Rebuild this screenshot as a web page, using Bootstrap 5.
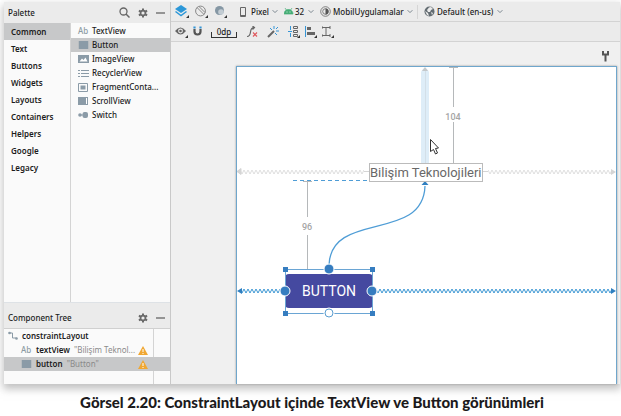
<!DOCTYPE html>
<html lang="tr">
<head>
<meta charset="utf-8">
<meta name="viewport" content="width=device-width, initial-scale=1">
<title>ConstraintLayout</title>
<link href="https://cdn.jsdelivr.net/npm/bootstrap@5.3.0/dist/css/bootstrap.min.css" rel="stylesheet">
<style>
body{background:#fff;font-family:"Noto Sans","Open Sans",sans-serif;font-size:8px;line-height:14px;color:#1c1c1c;font-weight:500}
button,select{font:inherit;color:inherit;background:none;border:0;padding:0;margin:0}
svg{display:block;flex:none}
.page{padding:2px 1px 0 4px}
.ide{background:#f0f0f0;box-shadow:0 4px 8px 1px #8888}
.side{width:167px;border-right:1px solid #c9c9c9;background:#ebebeb}
.head{height:21px;background:#ebebeb;padding:0 5px 0 4px}
.head h2{font-size:8px;line-height:14px;margin:0;font-weight:500}
.pane{background:#fafafa}
.cats{width:67px;border-right:1px solid #d4d4d4}
.cats button{height:17px;padding-left:7px;text-align:left;font-weight:600}
.wid{padding-top:1px}
.wid button{height:14px;padding-left:7px;gap:3px;text-align:left}
.sel{background:#c7c8c9}
.ab{color:#8d9aa3;width:11px;flex:none}
.tree{border-top:1px solid #d0d0d0;padding-bottom:13px;background:linear-gradient(#d4d4d4,#d4d4d4) 149px 0/1px 100% no-repeat #fafafa}
.tree li{height:14px;white-space:nowrap}
.leaf{padding:0 22px 0 17px}
.hint{color:#8a8a8a;font-weight:400}
.name{font-weight:600}
.bar{height:20px;border-bottom:1px solid #d3d3d3;background:#ebebeb;padding-left:4px;gap:6px}
.bar select{appearance:none;outline:0;line-height:14px}
.bar label{gap:0}
.device{margin-left:7px}
.locale{padding-left:6px;margin-left:-2px;border-left:1px solid #d5d5d5}
.chev{margin-left:3px}
.tools{gap:5px}
.dim{width:26px;height:13px;line-height:11px;border-bottom:1px solid #333;background:linear-gradient(#333,#333) 0 100%/1px 5px no-repeat,linear-gradient(#333,#333) 100% 100%/1px 5px no-repeat}
.surface{padding:24px 3px 0 65px;background:#f0f0f0}
.wrench{top:9px;right:11px}
.canvas{background:#fff;border-top:1px solid #6fa6cc;box-shadow:0 0 2px #999}
.edge{inset:0;border:solid #6fa6cc;border-width:0 1px}
.tv{left:133px;top:96px;border:1px solid #bbb;background:#fff;color:#686868;font:13px/17px Roboto,sans-serif;white-space:nowrap}
.andbtn{left:49px;top:207px;width:88px;height:34px;border-radius:4px;background:#4549a0;color:#fff;font:400 14px/34px Roboto,sans-serif}
.caption{font:900 15px/20px "Lato","Open Sans",sans-serif;padding:8px 0 4px;color:#1c1a1c}
</style>
<script src="https://cdn.jsdelivr.net/npm/bootstrap@5.3.0/dist/js/bootstrap.bundle.min.js"></script>
</head>
<body>
<svg width="0" height="0" class="position-absolute" aria-hidden="true">
<defs>
<symbol id="gear" viewBox="0 0 10 10"><path d="M5 .5v9M.9 2.700l8.200 4.600M.9 7.300l8.200-4.600" stroke="#6a6a6a" stroke-width="2"/><circle cx="5" cy="5" r="3.300" fill="#6a6a6a"/><circle cx="5" cy="5" r="1.600" fill="#ebebeb"/></symbol>
<symbol id="chev" viewBox="0 0 6 5"><path d="M.6 1.200 3 3.600 5.400 1.200" fill="none" stroke="#7b8790"/></symbol>
<symbol id="warn" viewBox="0 0 10 9"><path d="M5 0 10 9H0z" fill="#f0a732"/><path d="M5 3v3M5 7v1" stroke="#fff"/></symbol>
<symbol id="blk" viewBox="0 0 10 8"><rect width="10" height="8" rx=".5" fill="#8b9ba7"/></symbol>
<pattern id="zg" width="4" height="6" patternUnits="userSpaceOnUse" y="102"><path d="M-1 2.500 0 1l2 4 2-4 1 2" fill="none" stroke="#dadada" stroke-width=".9"/></pattern>
<pattern id="zb" width="4" height="6" patternUnits="userSpaceOnUse" y="221"><path d="M-1 3 0 1l2 4 2-4 1 2" fill="none" stroke="#3d97d3"/></pattern>
</defs></svg>
<figure class="page d-flex flex-column vh-100 m-0">
<div class="ide d-flex flex-grow-1">
<aside class="side d-flex flex-column flex-shrink-0">
  <div class="head d-flex align-items-center"><h2 class="me-auto">Palette</h2>
    <button aria-label="Search" class="me-2"><svg width="11" height="11" viewBox="0 0 11 11"><circle cx="4.500" cy="4.500" r="3.500" fill="none" stroke="#666" stroke-width="1.300"/><path d="m7 7 3.500 3.500" stroke="#666" stroke-width="1.500"/></svg></button>
    <button aria-label="Palette settings" class="me-2"><svg width="10" height="10"><use href="#gear"/></svg></button>
    <button aria-label="Hide palette"><svg width="9" height="10"><path d="M0 5h9" stroke="#777" stroke-width="1.500"/></svg></button>
  </div>
  <div class="pane d-flex flex-grow-1 border-bottom">
    <nav class="cats d-flex flex-column" aria-label="Categories">
      <button class="sel">Common</button><button>Text</button><button>Buttons</button><button>Widgets</button><button>Layouts</button><button>Containers</button><button>Helpers</button><button>Google</button><button>Legacy</button>
    </nav>
    <div class="wid d-flex flex-column flex-grow-1">
      <button class="d-flex align-items-center"><span class="ab">Ab</span>TextView</button>
      <button class="d-flex align-items-center sel"><svg width="11" height="8" viewBox="0 0 10 8"><use href="#blk"/></svg>Button</button>
      <button class="d-flex align-items-center"><svg width="11" height="8"><rect width="11" height="8" fill="#8b9ba7"/><path d="M1.500 6.500 4 3.500l1.500 1.500L7.500 2.500l2 4z" fill="#fff"/></svg>ImageView</button>
      <button class="d-flex align-items-center"><svg width="11" height="9"><path d="M0 1.500h2m1 0h8M0 4.500h2m1 0h8M0 7.500h2m1 0h8" stroke="#8b9ba7"/></svg>RecyclerView</button>
      <button class="d-flex align-items-center"><svg width="11" height="9"><path d="M.5.5h9v8h-9z" fill="none" stroke="#8b9ba7"/><path d="M2.500 2.500h5v4h-5z" fill="#8b9ba7"/></svg>FragmentConta...</button>
      <button class="d-flex align-items-center"><svg width="11" height="8"><rect width="10" height="8" fill="#8b9ba7"/><path d="M8.500 1v6" stroke="#fff"/></svg>ScrollView</button>
      <button class="d-flex align-items-center"><svg width="11" height="8"><circle cx="2" cy="4" r="1.800" fill="#8b9ba7"/><path d="M2 4h3" stroke="#8b9ba7"/><rect x="4.500" y="1" width="5.500" height="6" rx="2" fill="#8b9ba7"/></svg>Switch</button>
    </div>
  </div>
  <div class="head d-flex align-items-center mt-1"><h2 class="me-auto">Component Tree</h2>
    <button aria-label="Tree settings" class="me-2"><svg width="10" height="10"><use href="#gear"/></svg></button>
    <button aria-label="Hide tree"><svg width="9" height="10"><path d="M0 5h9" stroke="#777" stroke-width="1.500"/></svg></button>
  </div>
  <ul class="tree list-unstyled m-0">
    <li class="d-flex align-items-center ps-1 gap-1"><svg width="10" height="10"><path d="M1.500 2h3v5h4" fill="none" stroke="#8b9ba7"/><circle cx="1.500" cy="2" r="1.300" fill="#8b9ba7"/><circle cx="8.500" cy="7.500" r="1.300" fill="#8b9ba7"/></svg><span class="name">constraintLayout</span></li>
    <li class="leaf d-flex align-items-center"><span class="ab me-1">Ab</span><span class="name me-1">textView</span><span class="hint me-auto">"Bilişim Teknol...</span><svg width="10" height="9"><use href="#warn"/></svg></li>
    <li class="leaf d-flex align-items-center sel"><svg width="11" height="8" class="me-1" viewBox="0 0 10 8"><use href="#blk"/></svg><span class="name me-1">button</span><span class="hint me-auto">"Button"</span><svg width="10" height="9"><use href="#warn"/></svg></li>
  </ul>
</aside>
<main class="d-flex flex-column flex-grow-1">
  <div class="bar d-flex align-items-center">
    <button aria-label="Surface"><svg width="14" height="13"><path d="m6 0 6 4-6 4-6-4z" fill="#2b97d8"/><path d="m.5 6.500 5.500 4 5.500-4" fill="none" stroke="#2b97d8" stroke-width="1.500"/><path d="M11 13h3v-3z" fill="#333"/></svg></button>
    <button aria-label="Orientation"><svg width="13" height="13"><circle cx="5.500" cy="6" r="4.900" fill="none" stroke="#888"/><path d="m2 2.500 7 7M4 1.500l6 6" stroke="#888"/><path d="M10 13h3v-3z" fill="#333"/></svg></button>
    <button aria-label="Night mode"><svg width="13" height="13"><circle cx="5.500" cy="5.500" r="4.500" fill="#8597a4"/><circle cx="7" cy="7" r="2.800" fill="#c2ccd3"/><path d="M10 13h3v-3z" fill="#333"/></svg></button>
    <label class="device d-flex align-items-center"><svg width="11" height="10"><path d="M.5.5h5v9h-5z" fill="none" stroke="#666"/><path d="M.5 8.500h5" stroke="#666"/></svg><select aria-label="Device"><option>Pixel</option></select><svg width="6" height="5" class="chev"><use href="#chev"/></svg></label>
    <label class="d-flex align-items-center"><svg width="11" height="7"><path d="M0 6a4.500 4.500 0 0 1 9 0zM1 0l2 3M8 0 6 3" fill="#45ad76" stroke="#45ad76" stroke-width=".7"/><path d="M2.500 4h1m2 0h1" stroke="#fff" stroke-width=".8"/></svg><select aria-label="API"><option>32</option></select><svg width="6" height="5" class="chev"><use href="#chev"/></svg></label>
    <label class="d-flex align-items-center"><svg width="13" height="11"><circle cx="5.500" cy="5.500" r="4.800" fill="none" stroke="#666" stroke-width=".8"/><circle cx="5.500" cy="5.500" r="2.800" fill="none" stroke="#666" stroke-width=".8"/><path d="M5.500 2.500a3 3 0 0 1 0 6z" fill="#555"/></svg><select aria-label="Theme"><option>MobilUygulamalar</option></select><svg width="6" height="5" class="chev"><use href="#chev"/></svg></label>
    <label class="locale d-flex align-items-center"><svg width="13" height="11"><circle cx="5.500" cy="5.500" r="5" fill="#636c72"/><path d="M5 1.500 7 1l2 2-2 1-1 2-2 0-1-2zM1 5l3 2 1 3-2-1zM7 6l2 1-1 2z" fill="#ebebeb"/></svg><select aria-label="Locale"><option>Default (en-us)</option></select><svg width="6" height="5" class="chev"><use href="#chev"/></svg></label>
  </div>
  <div class="bar tools d-flex align-items-center">
    <button aria-label="View options"><svg width="13" height="13"><path d="M0 6q5.500-7 11 0-5.500 7-11 0z" fill="#666"/><circle cx="5.500" cy="6" r="2.400" fill="#ebebeb"/><circle cx="5.500" cy="6" r="1.300" fill="#666"/><path d="M10 13h3v-3z" fill="#333"/></svg></button>
    <button aria-label="Autoconnect" class="me-1"><svg width="9" height="11"><path d="M1.500 3v2.500a3 3 0 0 0 6 0V3" fill="none" stroke="#555" stroke-width="2.200"/><path d="M.4 1.500h2.200m3.800 0h2.200" stroke="#3595d6" stroke-width="2"/></svg></button>
    <button class="dim text-center me-1">0dp</button>
    <button aria-label="Clear constraints" class="me-1"><svg width="12" height="12"><path d="M1 10.500c6 0 1-9 7-9M6.500 0l2 1.500-2 2" fill="none" stroke="#666" stroke-width="1.200"/><path d="m7 6.500 4 4m0-4-4 4" stroke="#e0565b" stroke-width="1.200"/></svg></button>
    <button aria-label="Infer constraints" class="me-1"><svg width="12" height="12"><path d="m1 11 6-6" stroke="#666" stroke-width="2"/><path d="M7 0v3M3 2l2 2M9 5h3M9 3l2-2M8 7l2 2" stroke="#3595d6"/></svg></button>
    <button aria-label="Pack"><svg width="12" height="12"><path d="M2.500 0v4M2.500 7v4M0 5.500h4" stroke="#3595d6"/><path d="M5.500.5h4v2h-4zM5.500 4.500h4v2h-4zM5.500 8.500h4v2h-4z" fill="none" stroke="#666"/><path d="M9 12h3V9z" fill="#333"/></svg></button>
    <button aria-label="Align"><svg width="12" height="12"><path d="M.5 0v11" stroke="#3595d6"/><path d="M2 1h4v3H2zM2 6h8v3H2z" fill="#666"/><path d="M9 12h3V9z" fill="#333"/></svg></button>
    <button aria-label="Guidelines"><svg width="12" height="12"><path d="M0 1.500h8M0 9.500h8M0 0v3m8-3v3M0 8v3m8-3v3M4 2v7" stroke="#666"/><path d="M9 12h3V9z" fill="#333"/></svg></button>
  </div>
  <div class="surface position-relative d-flex flex-grow-1">
    <svg class="wrench position-absolute" width="7" height="11"><path d="M1 0v3.500h5V0M3.500 4v6.500" fill="none" stroke="#555" stroke-width="2"/></svg>
    <div class="canvas position-relative flex-grow-1 overflow-hidden">
      <svg class="position-absolute" width="100%" height="100%" font-family="Roboto, sans-serif" font-size="9" fill="none">
        <path d="M185 97V5q4-8 8 0v92z" fill="#deedf8"/><path d="M189.500 3v94" stroke="#d3dfe8"/><path d="m186 4 3-4 3 4z" fill="#c4c8ca"/>
        <path d="M217.500 1v39M217.500 55v41M213 .5h9M213 96.500h9M71.500 114v36M71.500 168v34M67 114.500h9M67 202.500h9" stroke="#b5b8ba"/>
        <text x="217" y="53" text-anchor="middle" fill="#a5a5a5">104</text><text x="71" y="163" text-anchor="middle" fill="#a5a5a5">96</text>
        <rect x="5" y="102" width="123" height="6" fill="url(#zg)"/><path d="M128 104.500h5M1 104.500l4-3v6z" stroke="#d5d5d5" fill="#d5d5d5"/>
        <path d="M246 104.500h6" stroke="#d5d5d5"/>
        <svg x="252" y="0" width="100%" height="300" overflow="hidden"><rect y="102" width="100%" height="6" fill="url(#zg)"/></svg>
        <rect x="5" y="221" width="40" height="6" fill="url(#zb)"/><rect x="141" y="221" width="100%" height="6" fill="url(#zb)"/>
        <path d="m1 224 5-3v6z" fill="#2f7fc0"/>
        <svg x="100%" overflow="visible"><path d="M-5 99h5v12h-5zM-5 219h5v12h-5z" fill="#fff"/><path d="m-1 105-5-3v6z" fill="#d5d5d5"/><path d="m-1 224-5-3v6z" fill="#2f7fc0"/></svg>
        <path d="M57 113.500h75" stroke="#4f9dd6" stroke-dasharray="4 3"/>
        <path d="M93 198C95 143 187 176 189 119" stroke="#4f9dd6" stroke-width="1.300"/><path d="m185.500 118 3.500-4 3.500 4z" fill="#2f7fc0"/>
      </svg>
      <div class="edge position-absolute"></div>
      <span class="tv position-absolute">Bilişim Teknolojileri</span>
      <button class="andbtn position-absolute">BUTTON</button>
      <svg class="position-absolute pe-none" width="100%" height="100%" fill="#367dc0">
        <path d="M49.500 202.500h87v44h-87z" fill="none" stroke="#6aa5d4"/>
        <path d="M47 200h5v5h-5zM134 200h5v5h-5zM47 244h5v5h-5zM134 244h5v5h-5z"/>
        <g stroke="#fff"><circle cx="93" cy="202" r="5"/><circle cx="49" cy="224" r="5"/><circle cx="136" cy="224" r="5"/></g>
        <circle cx="93" cy="246" r="5.500" fill="#fff"/><circle cx="93" cy="246" r="4" fill="#fff" stroke="#5b9dd0"/>
        <path d="M194.500 72.500v12l3-2 2 4.500 2-1-2-4.500 3-.5z" fill="#fff" stroke="#333"/>
      </svg>
    </div>
  </div>
</main>
</div>
<figcaption class="caption text-center">Görsel 2.20: ConstraintLayout içinde TextView ve Button görünümleri</figcaption>
</figure>
</body>
</html>
